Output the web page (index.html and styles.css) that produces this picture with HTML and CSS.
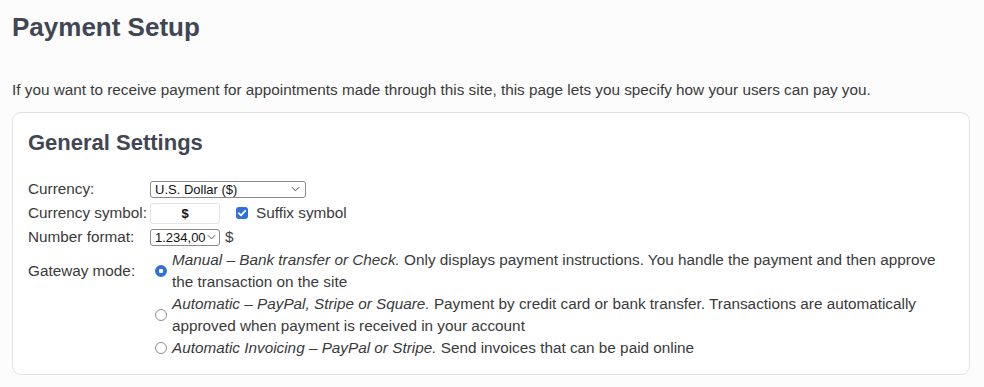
FILE: index.html
```html
<!DOCTYPE html>
<html lang="en">
<head>
<meta charset="utf-8">
<title>Payment Setup</title>
<link rel="stylesheet" href="styles.css">
</head>
<body>
<div class="page">
  <h1 class="title">Payment Setup</h1>
  <p class="intro">If you want to receive payment for appointments made through this site, this page lets you specify how your users can pay you.</p>
  <section class="card">
    <h2 class="card-title">General Settings</h2>
    <div class="form">
      <div class="label">Currency:</div>
      <div class="field">
        <div class="select select-wide"><span>U.S. Dollar ($)</span><svg class="chev" viewBox="0 0 10 6" width="9" height="6"><path d="M1 1l4 4 4-4" fill="none" stroke="#555" stroke-width="1.1"/></svg></div>
      </div>
      <div class="label">Currency symbol:</div>
      <div class="field">
        <div class="text-input">$</div>
        <label class="check"><span class="checkbox"><svg viewBox="0 0 12 12" width="12" height="12"><path d="M2.8 6.2l2.2 2.2 4.2-4.6" fill="none" stroke="#fff" stroke-width="1.8" stroke-linecap="round" stroke-linejoin="round"/></svg></span>Suffix symbol</label>
      </div>
      <div class="label">Number format:</div>
      <div class="field">
        <div class="select select-narrow"><span>1.234,00</span><svg class="chev" viewBox="0 0 10 6" width="9" height="6"><path d="M1 1l4 4 4-4" fill="none" stroke="#555" stroke-width="1.1"/></svg></div>
        <span class="suffix">$</span>
      </div>
      <div class="label">Gateway mode:</div>
      <div class="option">
        <span class="radio radio-on"></span>
        <span class="option-text"><em>Manual – Bank transfer or Check.</em> Only displays payment instructions. You handle the payment and then approve the transaction on the site</span>
      </div>
      <div class="label"></div>
      <div class="option">
        <span class="radio"></span>
        <span class="option-text"><em>Automatic – PayPal, Stripe or Square.</em> Payment by credit card or bank transfer. Transactions are automatically approved when payment is received in your account</span>
      </div>
      <div class="label"></div>
      <div class="option">
        <span class="radio"></span>
        <span class="option-text"><em>Automatic Invoicing – PayPal or Stripe.</em> Send invoices that can be paid online</span>
      </div>
    </div>
  </section>
</div>
</body>
</html>
```

FILE: styles.css
```css
* { box-sizing: border-box; }
html, body { margin: 0; padding: 0; background: #fcfcfc; }
body {
  font-family: "Liberation Sans", Arial, sans-serif;
  color: #3a3a3a;
  font-size: 14px;
}
.page { padding: 0 14px 0 12px; }
.title {
  margin: 0;
  padding-top: 12px;
  font-size: 26px;
  line-height: 30px;
  font-weight: 700;
  color: #404653;
}
.intro {
  margin: 38px 0 0;
  font-size: 15.3px;
  line-height: 20px;
}
.card {
  margin-top: 12px;
  background: #fff;
  border: 1px solid #e2e2e2;
  border-radius: 9px;
  padding: 16px 15px 12px;
  height: 263px;
}
.card-title {
  margin: 0;
  font-size: 22px;
  line-height: 28px;
  font-weight: 700;
  color: #404653;
}
.form {
  margin-top: 20px;
  display: grid;
  grid-template-columns: 122px 1fr;
  font-size: 15.3px;
}
.label {
  align-self: center;
  white-space: nowrap;
}
.field {
  display: flex;
  align-items: center;
  min-height: 24px;
}
.select {
  display: flex;
  align-items: center;
  justify-content: space-between;
  height: 17px;
  border: 1px solid #8a8a8a;
  border-radius: 3px;
  background: #fff;
  padding: 0 5px 0 4px;
  font-size: 13px;
  color: #111;
}
.select-wide { width: 156px; }
.select-narrow { width: 70px; padding-right: 3px; }
.chev { flex: none; }
.text-input {
  width: 70px;
  height: 21px;
  border: 1px solid #e4e4e4;
  border-radius: 3px;
  text-align: center;
  font-size: 13px;
  line-height: 19px;
  color: #111;
  font-weight: 700;
}
.check {
  display: flex;
  align-items: center;
  margin-left: 16px;
}
.checkbox {
  width: 12px;
  height: 12px;
  border-radius: 3px;
  background: #2f6fde;
  margin-right: 8px;
  display: inline-flex;
}
.suffix { margin-left: 5px; }
.option {
  display: flex;
  align-items: center;
  padding-right: 0;
  line-height: 22px;
}
.radio {
  flex: none;
  width: 12px;
  height: 12px;
  border-radius: 50%;
  border: 1px solid #8d8d8d;
  background: #fff;
  margin: 0 5px 0 5px;
}
.radio-on {
  border: 1px solid #2f6fde;
  background: radial-gradient(circle, #fff 0 2px, #2f6fde 2.5px);
}
.option-text em { font-style: italic; }
```
